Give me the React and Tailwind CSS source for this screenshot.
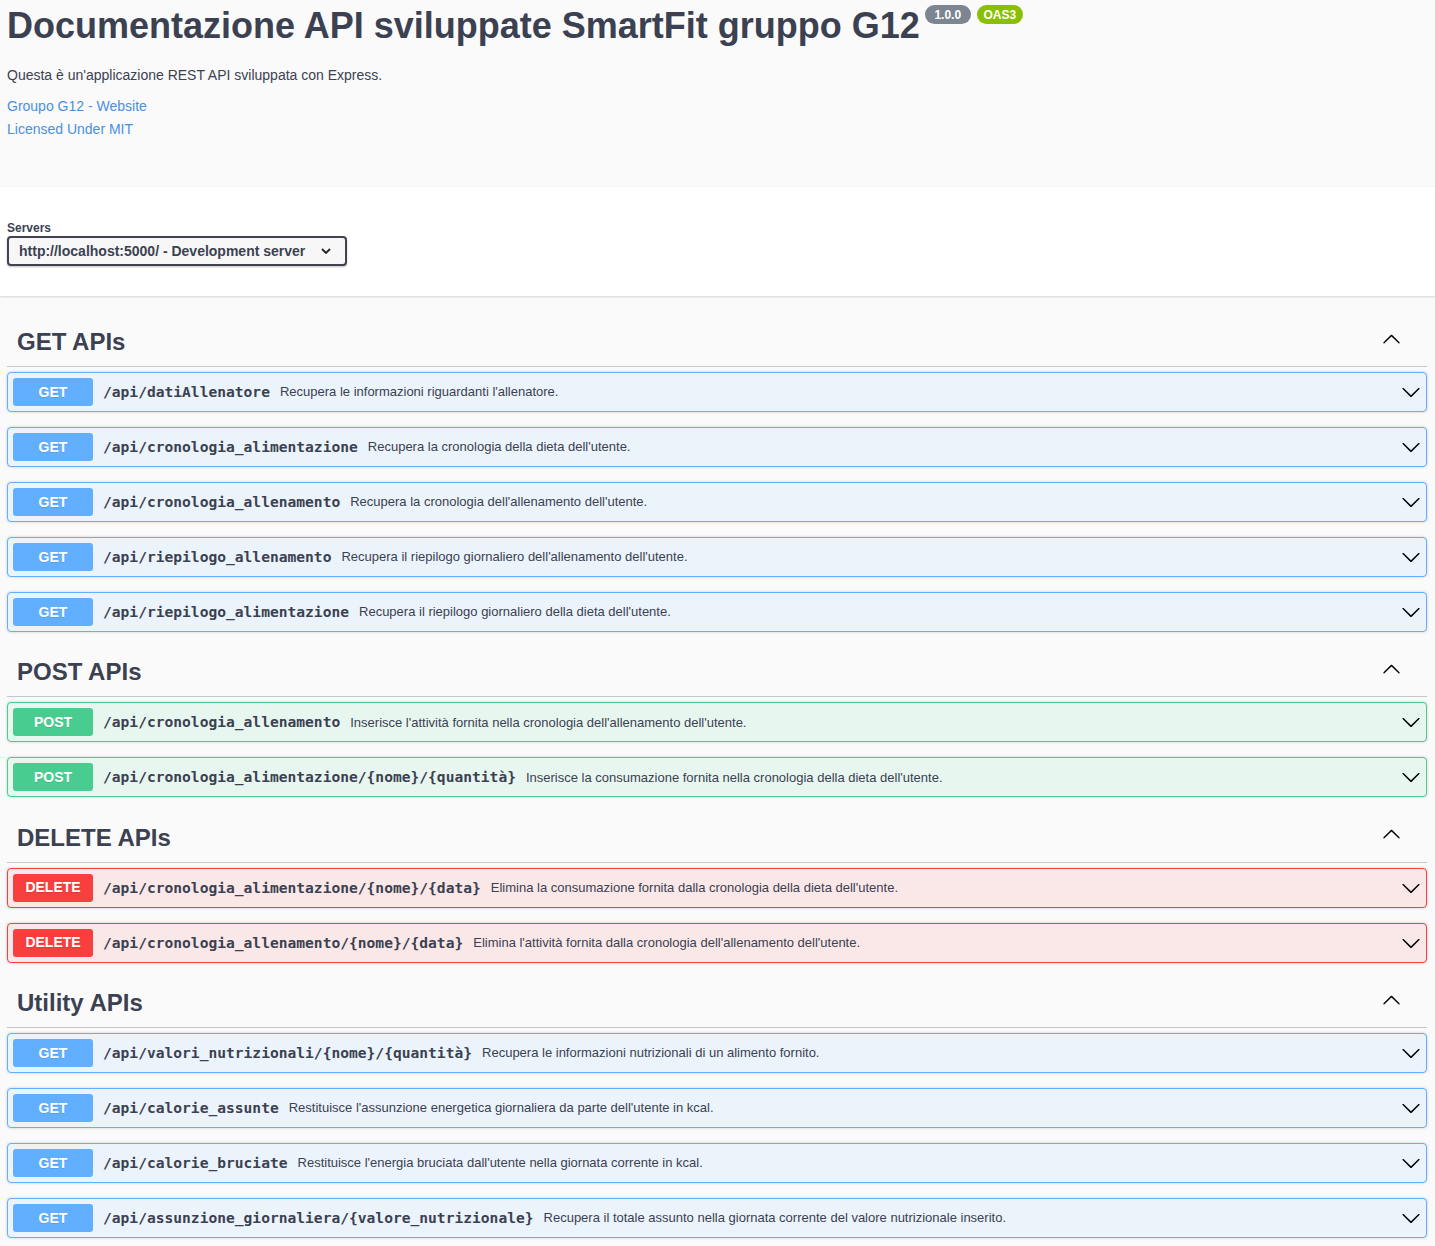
import React from "react";

const sections = [
  {
    title: "GET APIs",
    ops: [
      ["GET", "/api/datiAllenatore", "Recupera le informazioni riguardanti l'allenatore."],
      ["GET", "/api/cronologia_alimentazione", "Recupera la cronologia della dieta dell'utente."],
      ["GET", "/api/cronologia_allenamento", "Recupera la cronologia dell'allenamento dell'utente."],
      ["GET", "/api/riepilogo_allenamento", "Recupera il riepilogo giornaliero dell'allenamento dell'utente."],
      ["GET", "/api/riepilogo_alimentazione", "Recupera il riepilogo giornaliero della dieta dell'utente."],
    ],
  },
  {
    title: "POST APIs",
    ops: [
      ["POST", "/api/cronologia_allenamento", "Inserisce l'attività fornita nella cronologia dell'allenamento dell'utente."],
      ["POST", "/api/cronologia_alimentazione/{nome}/{quantità}", "Inserisce la consumazione fornita nella cronologia della dieta dell'utente."],
    ],
  },
  {
    title: "DELETE APIs",
    ops: [
      ["DELETE", "/api/cronologia_alimentazione/{nome}/{data}", "Elimina la consumazione fornita dalla cronologia della dieta dell'utente."],
      ["DELETE", "/api/cronologia_allenamento/{nome}/{data}", "Elimina l'attività fornita dalla cronologia dell'allenamento dell'utente."],
    ],
  },
  {
    title: "Utility APIs",
    ops: [
      ["GET", "/api/valori_nutrizionali/{nome}/{quantità}", "Recupera le informazioni nutrizionali di un alimento fornito."],
      ["GET", "/api/calorie_assunte", "Restituisce l'assunzione energetica giornaliera da parte dell'utente in kcal."],
      ["GET", "/api/calorie_bruciate", "Restituisce l'energia bruciata dall'utente nella giornata corrente in kcal."],
      ["GET", "/api/assunzione_giornaliera/{valore_nutrizionale}", "Recupera il totale assunto nella giornata corrente del valore nutrizionale inserito."],
    ],
  },
];

const styles = {
  GET: {
    row: "border-[#61affe] bg-[#ebf3fb]",
    badge: "bg-[#61affe]",
  },
  POST: {
    row: "border-[#49cc90] bg-[#e8f6f0]",
    badge: "bg-[#49cc90]",
  },
  DELETE: {
    row: "border-[#f93e3e] bg-[#fae7e7]",
    badge: "bg-[#f93e3e]",
  },
};

const ARROW =
  "M17.418 6.109c.272-.268.709-.268.979 0s.271.701 0 .969l-7.908 7.83c-.27.268-.707.268-.979 0l-7.908-7.830c-.27-.268-.27-.701 0-.969.271-.268.709-.268.979 0L10 13.25l7.418-7.141z";

function ChevronDown({ size = 20, className = "" }) {
  return (
    <svg width={size} height={size} viewBox="0 0 20 20" className={className} aria-hidden="true">
      <path d={ARROW} fill="#000" />
    </svg>
  );
}

function ChevronUp({ size = 20, className = "" }) {
  return (
    <svg width={size} height={size} viewBox="0 0 20 20" className={className} aria-hidden="true">
      <path d={ARROW} fill="#000" transform="rotate(180 10 10)" />
    </svg>
  );
}

function OpRow({ method, path, desc }) {
  const s = styles[method];
  return (
    <div
      className={`flex h-[40px] items-center rounded-[4px] border p-[5px] shadow-[0_0_3px_rgba(0,0,0,0.19)] ${s.row}`}
    >
      <div
        className={`flex h-[28px] w-[80px] shrink-0 items-center justify-center rounded-[3px] text-[14px] font-bold text-white [text-shadow:0_1px_0_rgba(0,0,0,0.1)] ${s.badge}`}
      >
        {method}
      </div>
      <span className="shrink-0 px-[10px] font-['DejaVu_Sans_Mono',monospace] text-[14.6px] font-bold text-[#3b4151]">
        {path}
      </span>
      <span className="flex-1 text-[13px] text-[#3b4151]">{desc}</span>
      <ChevronDown size={20} className="shrink-0" />
    </div>
  );
}

function Section({ title, ops }) {
  return (
    <div>
      <div className="flex h-[50px] items-center border-b border-[#c6c7cb] pl-[10px] pr-[26px] pt-[10px] pb-[10px]">
        <h3 className="flex-1 text-[24px] font-bold leading-[29px] text-[#3b4151]">{title}</h3>
        <ChevronUp size={19} className="mb-[5px] shrink-0" />
      </div>
      <div className="mt-[5px] flex flex-col gap-[15px] pb-[15.4px]">
        {ops.map(([m, p, d]) => (
          <OpRow key={m + p} method={m} path={p} desc={d} />
        ))}
      </div>
    </div>
  );
}

export default function App() {
  return (
    <div className="min-h-[1246px] bg-[#fafafa] font-['Liberation_Sans',Arial,sans-serif] text-[#3b4151]">
      {/* Info */}
      <div className="h-[187px] pl-[7px] pr-[8px] pt-[5px]">
        <div className="flex items-start">
          <h2 className="text-[36px] font-bold leading-[41px] text-[#3b4151]">
            Documentazione API sviluppate SmartFit gruppo G12
          </h2>
          <div className="ml-[5px] flex gap-[6px]">
            <span className="flex h-[19px] w-[46px] items-center justify-center rounded-full bg-[#7d8492] text-[12px] font-bold text-white">
              1.0.0
            </span>
            <span className="flex h-[19px] w-[46px] items-center justify-center rounded-full bg-[#89bf04] text-[12px] font-bold text-white">
              OAS3
            </span>
          </div>
        </div>
        <p className="mt-[21px] text-[14px] leading-[16px] text-[#3b4151]">
          Questa è un'applicazione REST API sviluppata con Express.
        </p>
        <div className="mt-[15px] flex flex-col gap-[7px] text-[14px] leading-[16px] text-[#4990e2]">
          <a href="#" className="w-fit">Groupo G12 - Website</a>
          <a href="#" className="w-fit">Licensed Under MIT</a>
        </div>
      </div>

      {/* Servers */}
      <div className="h-[109px] bg-white pl-[7px] pr-[8px] pt-[34px] shadow-[0_1px_2px_0_rgba(0,0,0,0.15)]">
        <div className="text-[12px] font-bold leading-[14px] text-[#3b4151]">Servers</div>
        <div className="mt-[1px] flex h-[30px] w-[340px] items-center rounded-[4px] border-2 border-[#41444e] bg-[#f7f7f7] pl-[10px] pr-[14px] shadow-[0_1px_2px_0_rgba(0,0,0,0.25)]">
          <span className="flex-1 text-[14px] font-bold text-[#3b4151]">
            http://localhost:5000/ - Development server
          </span>
          <svg width="10" height="6" viewBox="0 0 10 6" aria-hidden="true">
            <path d="M1 1l4 4 4-4" fill="none" stroke="#222" strokeWidth="1.8" />
          </svg>
        </div>
      </div>

      {/* Operations */}
      <div className="pl-[7px] pr-[8px] pt-[21px]">
        {sections.map((s) => (
          <Section key={s.title} title={s.title} ops={s.ops} />
        ))}
      </div>
    </div>
  );
}
